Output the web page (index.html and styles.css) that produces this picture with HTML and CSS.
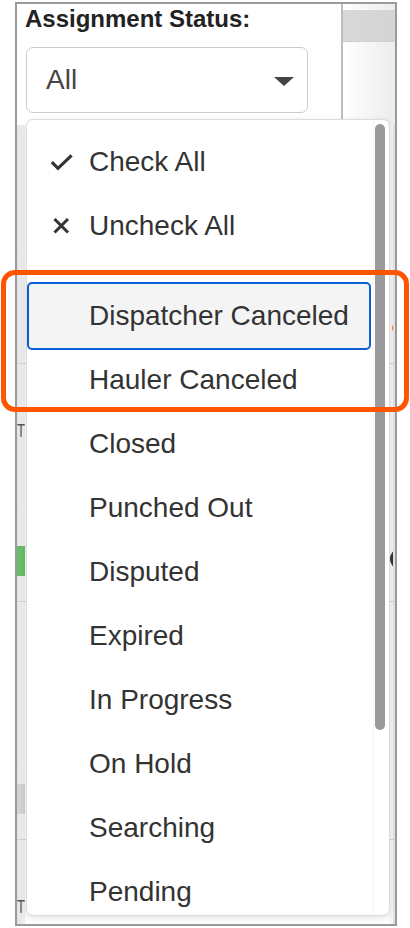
FILE: index.html
```html
<!DOCTYPE html>
<html lang="en">
<head>
<meta charset="utf-8">
<title>Assignment Status filter</title>
<link rel="stylesheet" href="styles.css">
</head>
<body>
<div class="frame">
  <div class="header">
    <div class="filter">
      <div class="title">Assignment Status:</div>
      <div class="select">
        <span class="select-value">All</span>
        <svg class="caret" width="20" height="9" viewBox="0 0 20 9"><polygon points="0,0 20,0 10,9" fill="#444"/></svg>
      </div>
    </div>
    <div class="side"><div class="side-band"></div></div>
  </div>
  <div class="table">
    <div class="row">
      <div class="cell-left"></div>
      <div class="cell-mid"></div>
      <div class="cell-right"><span class="dot dot-orange"></span></div>
    </div>
    <div class="row">
      <div class="cell-left"><span class="letter">T</span><span class="badge badge-green"></span></div>
      <div class="cell-mid"></div>
      <div class="cell-right"><span class="dot dot-dark"></span></div>
    </div>
    <div class="row">
      <div class="cell-left"><span class="letter letter-hidden">T</span><span class="badge badge-gray"></span></div>
      <div class="cell-mid"></div>
      <div class="cell-right"></div>
    </div>
    <div class="row">
      <div class="cell-left"><span class="letter">T</span></div>
      <div class="cell-mid"></div>
      <div class="cell-right"></div>
    </div>
  </div>

  <div class="dropdown">
    <div class="list">
      <div class="item item-action">
        <svg class="icon" width="22" height="22" viewBox="0 0 22 22"><polyline points="0.8,11 7,17.3 20.6,4.4" fill="none" stroke="#333" stroke-width="3.2"/></svg>
        <span>Check All</span>
      </div>
      <div class="item item-action">
        <svg class="icon" width="22" height="22" viewBox="0 0 22 22"><path d="M3.5 4 L17 17.5 M17 4 L3.5 17.5" fill="none" stroke="#333" stroke-width="3"/></svg>
        <span>Uncheck All</span>
      </div>
      <div class="divider"></div>
      <div class="item item-focus">Dispatcher Canceled</div>
      <div class="item">Hauler Canceled</div>
      <div class="item">Closed</div>
      <div class="item">Punched Out</div>
      <div class="item">Disputed</div>
      <div class="item">Expired</div>
      <div class="item">In Progress</div>
      <div class="item">On Hold</div>
      <div class="item">Searching</div>
      <div class="item">Pending</div>
    </div>
    <div class="scroll"><div class="thumb"></div></div>
  </div>
</div>
<div class="highlight"></div>
</body>
</html>
```
FILE: styles.css
```css
html, body {
  margin: 0;
  padding: 0;
}
body {
  position: relative;
  width: 410px;
  height: 928px;
  overflow: hidden;
  background: #fff;
  font-family: "Liberation Sans", Arial, sans-serif;
  color: #333;
}
.frame {
  position: relative;
  margin: 2px 0 0 15px;
  width: 378px;
  height: 920px;
  border: 2px solid #9a9a9a;
  overflow: hidden;
  background: #fff;
}
.header {
  display: flex;
  height: 121px;
}
.filter {
  width: 324px;
  padding: 1px 0 0 8px;
  box-sizing: border-box;
  background: #fff;
}
.title {
  font-weight: bold;
  font-size: 24px;
  line-height: 28px;
  color: #222;
}
.select {
  margin: 14px 0 0 1px;
  width: 282px;
  height: 66px;
  box-sizing: border-box;
  border: 1px solid #c9cdd2;
  border-radius: 7px;
  display: flex;
  align-items: center;
  justify-content: space-between;
  padding: 0 13px 0 19px;
  background: #fff;
}
.select-value {
  font-size: 28px;
  color: #444;
}
.caret {
  display: block;
  margin-top: 2px;
}
.side {
  flex: 1;
  border-left: 2px solid #bdbdbd;
  background: linear-gradient(to right, #ffffff, #ececec);
  padding-top: 6px;
}
.side-band {
  height: 31px;
  background: linear-gradient(to right, #d9d9d9, #d4d4d4);
  border-bottom: 1px solid #cfcfcf;
}
.table {
  display: flex;
  flex-direction: column;
}
.row {
  display: flex;
  height: 238px;
  border-top: 1px solid #d2d2d2;
  box-sizing: border-box;
}
.row:first-child {
  border-top: none;
}
.cell-left {
  width: 9px;
  flex: none;
  overflow: hidden;
  position: relative;
  background: linear-gradient(to right, #e4e4e4, #f1f1f1);
  border-right: 1px solid #fafafa;
  box-sizing: border-box;
}
.letter {
  display: block;
  margin: 58px 0 0 0;
  font-size: 13px;
  line-height: 18px;
  color: #555;
  transform: scaleY(1.4);
  transform-origin: 0 50%;
}
.letter-hidden {
  visibility: hidden;
}
.badge {
  position: absolute;
  left: 0;
  top: 182px;
  width: 9px;
  height: 30px;
}
.badge-green {
  background: #68bd69;
}
.badge-gray {
  background: #d2d2d2;
}
.cell-mid {
  flex: 1;
}
.cell-right {
  width: 6px;
  flex: none;
  position: relative;
  background: #f6f6f6;
  border-right: 2px solid #e2e2e2;
  box-sizing: border-box;
  overflow: hidden;
}
.dot {
  position: absolute;
  border-radius: 50%;
}
.dot-orange {
  left: 3px;
  top: 199px;
  width: 8px;
  height: 8px;
  background: #ff6a1a;
}
.dot-dark {
  left: 1px;
  top: 186px;
  width: 14px;
  height: 18px;
  background: #333;
}
.dropdown {
  position: absolute;
  left: 9px;
  top: 115px;
  width: 364px;
  height: 797px;
  box-sizing: border-box;
  border: 1px solid #dcdcdc;
  border-radius: 7px;
  background: #fff;
  box-shadow: 0 2px 6px rgba(0, 0, 0, 0.12);
  display: flex;
  overflow: hidden;
}
.list {
  flex: 1;
  padding-top: 10px;
  overflow: hidden;
}
.item {
  height: 64px;
  display: flex;
  align-items: center;
  padding-left: 62px;
  font-size: 28px;
  color: #333;
  white-space: nowrap;
  flex: none;
}
.item-action {
  padding-left: 24px;
}
.icon {
  display: block;
  flex: none;
  margin-right: 16px;
}
.divider {
  height: 26px;
}
.item-focus {
  margin: 0 4px 0 2px;
  padding-left: 60px;
  background: #f4f4f4;
  border-radius: 3px;
  outline: 2px solid #0a5fd3;
  outline-offset: 0;
}
.scroll {
  width: 16px;
  flex: none;
  border-left: 1px solid #f4f4f4;
  box-sizing: border-box;
}
.thumb {
  margin: 4px 4px 0 1px;
  height: 606px;
  width: 10px;
  border-radius: 5px;
  background: #9a9a9a;
}
.highlight {
  position: absolute;
  left: 1px;
  top: 270px;
  width: 408px;
  height: 142px;
  box-sizing: border-box;
  border: 5px solid #ff5500;
  border-radius: 14px;
}
```
